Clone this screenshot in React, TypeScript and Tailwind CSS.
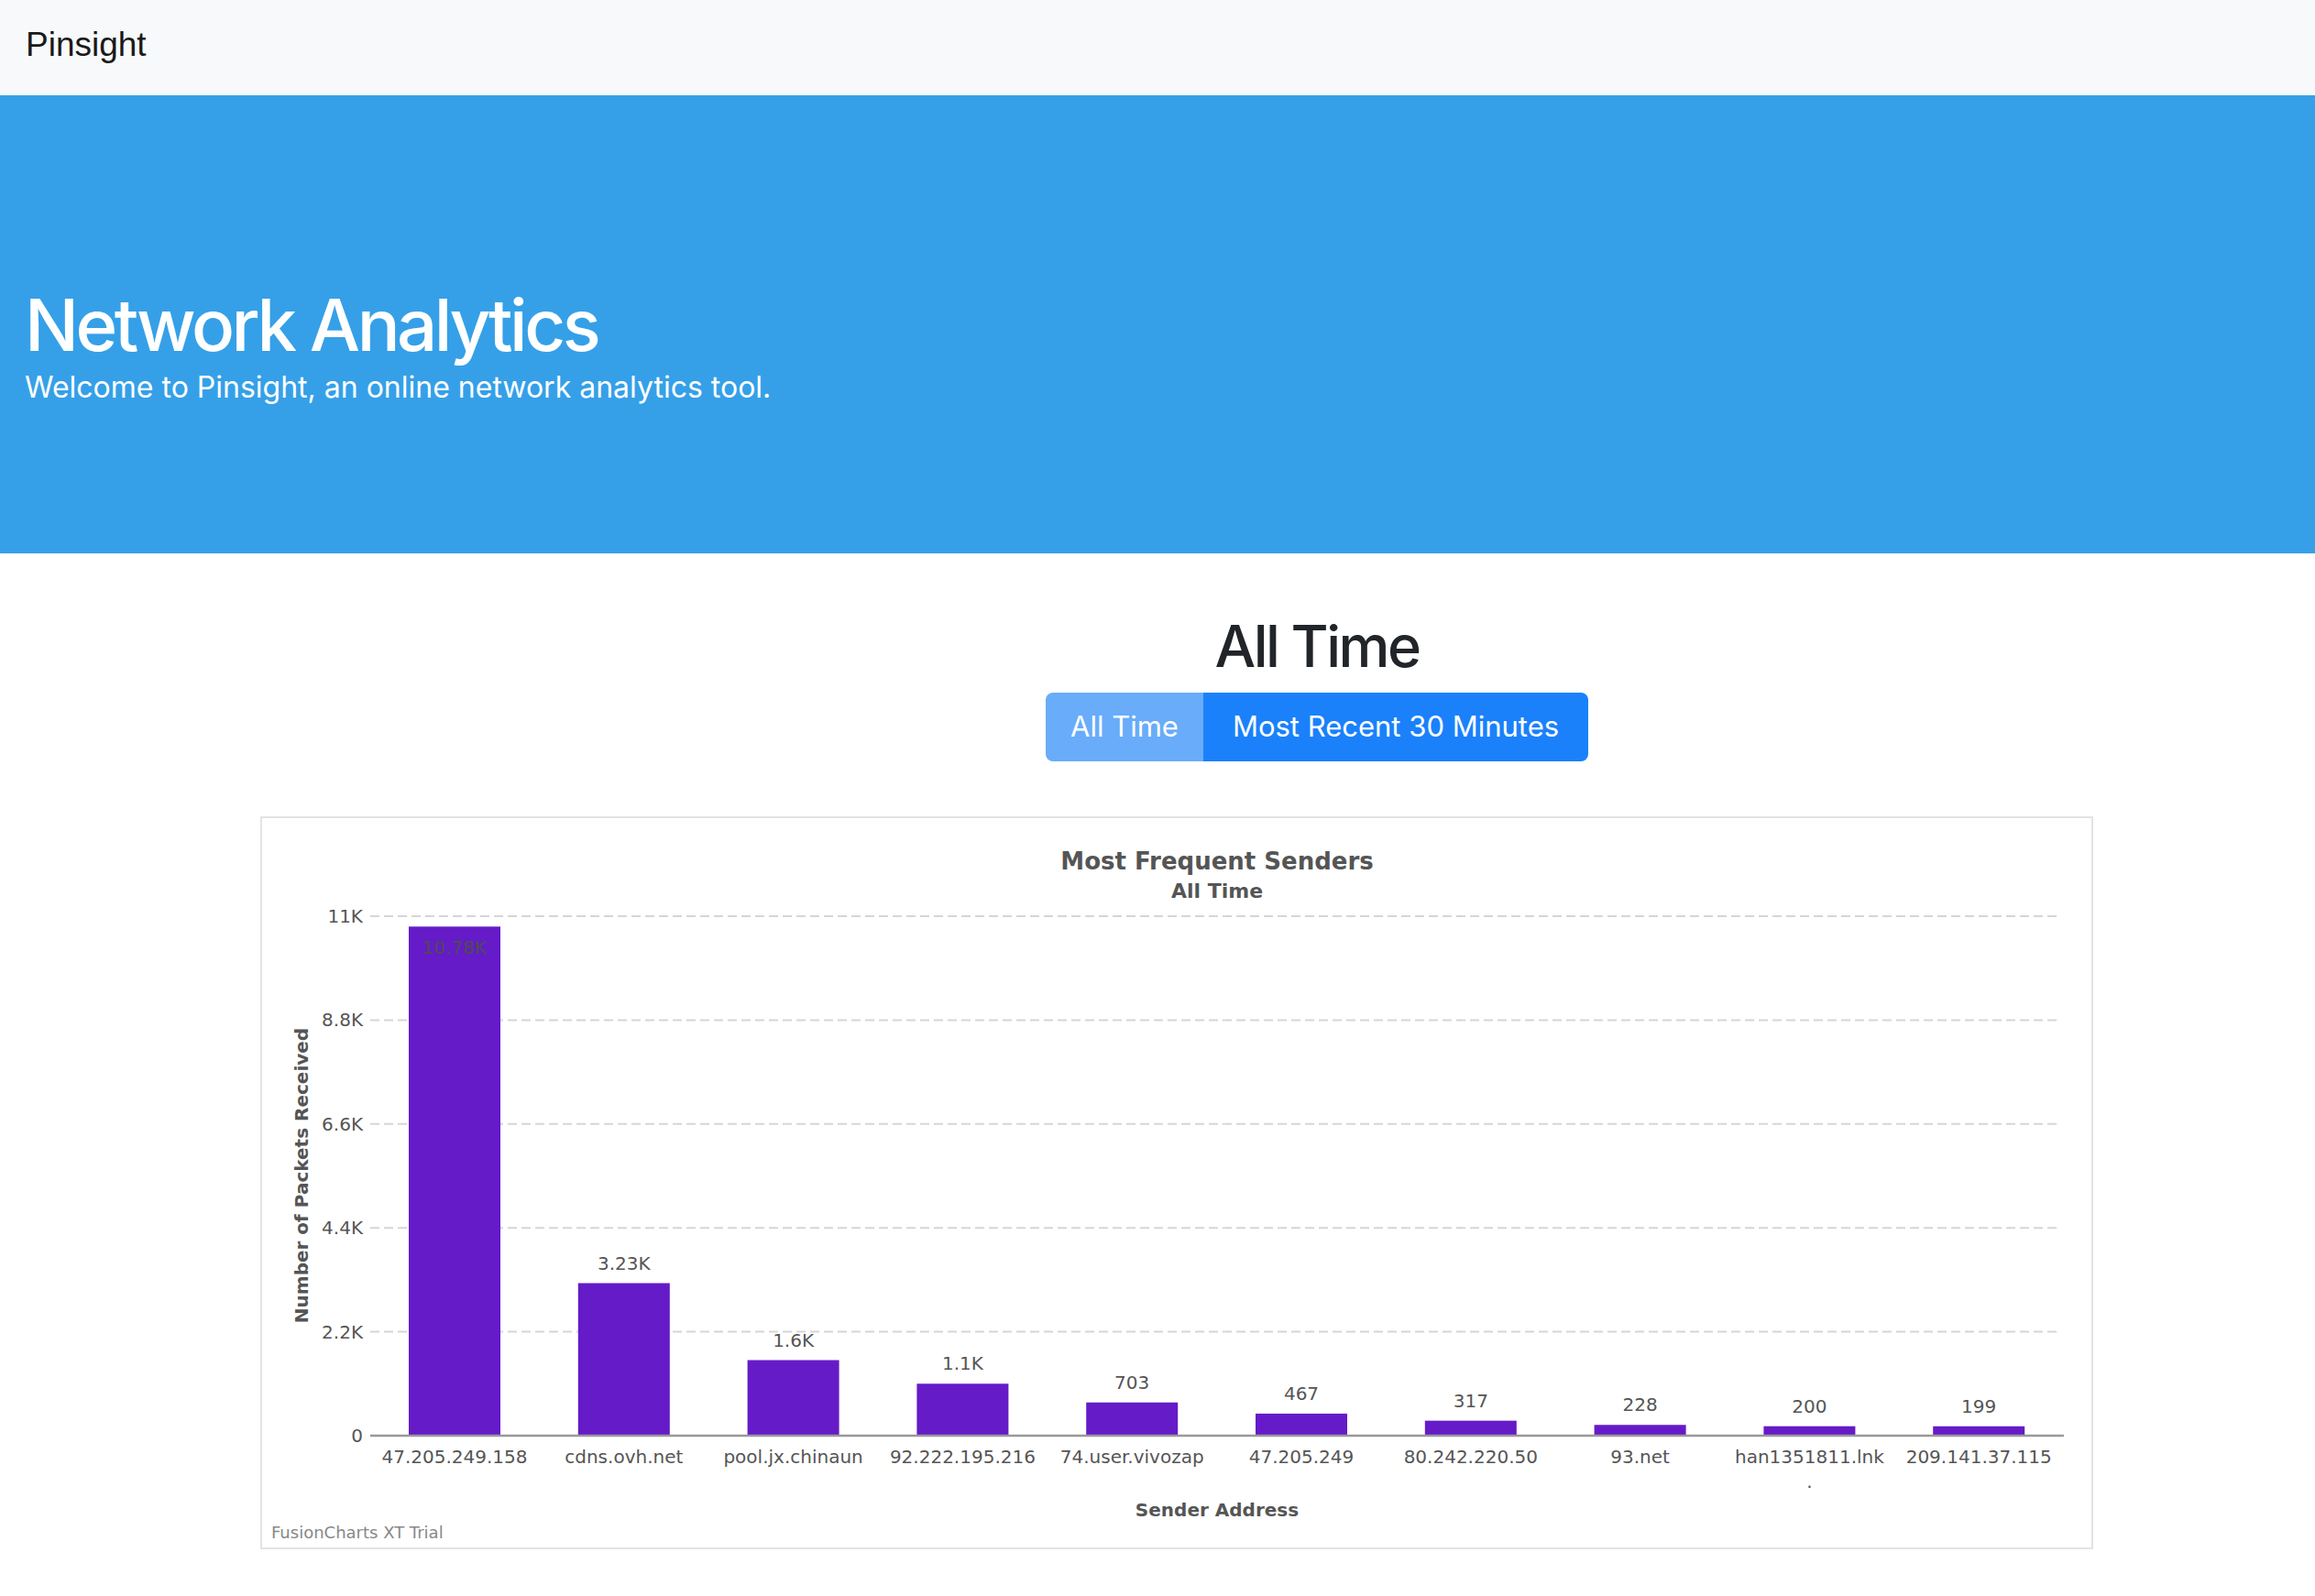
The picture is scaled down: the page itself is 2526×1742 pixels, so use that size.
import React from "react";

interface Sender {
  label: string;
  value: number;
  display: string;
}

const senders: Sender[] = [
  { label: "47.205.249.158", value: 10780, display: "10.78K" },
  { label: "cdns.ovh.net", value: 3230, display: "3.23K" },
  { label: "pool.jx.chinaun", value: 1600, display: "1.6K" },
  { label: "92.222.195.216", value: 1100, display: "1.1K" },
  { label: "74.user.vivozap", value: 703, display: "703" },
  { label: "47.205.249", value: 467, display: "467" },
  { label: "80.242.220.50", value: 317, display: "317" },
  { label: "93.net", value: 228, display: "228" },
  { label: "han1351811.lnk", value: 200, display: "200" },
  { label: "209.141.37.115", value: 199, display: "199" },
];

const ticks = ["0", "2.2K", "4.4K", "6.6K", "8.8K", "11K"];

// plot geometry, in px inside the chart card
const PLOT_LEFT = 118;
const PLOT_RIGHT = 1966;
const BASE_Y = 674;
const TOP_Y = 107;
const MAX = 11000;
const SLOT = 184.8;
const FIRST_CENTER = 210;
const BAR_W = 100;

const SendersChart = () => {
  const plotH = BASE_Y - TOP_Y;

  return (
    <svg
      width={1996}
      height={796}
      viewBox="0 0 1996 796"
      className="block font-['DejaVu_Sans',Verdana,sans-serif]"
    >
      <text x={1042} y={56} textAnchor="middle" fontSize={26} fontWeight="bold" fill="#555555">
        Most Frequent Senders
      </text>
      <text x={1042} y={87} textAnchor="middle" fontSize={22} fontWeight="bold" fill="#555555">
        All Time
      </text>

      {/* grid + y axis */}
      {ticks.map((t, i) => {
        const y = BASE_Y - (plotH / 5) * i;
        return (
          <g key={t}>
            {i > 0 && (
              <line
                x1={PLOT_LEFT}
                x2={PLOT_RIGHT - 5}
                y1={y}
                y2={y}
                stroke="#d6d6d6"
                strokeWidth={2}
                strokeDasharray="10 5"
              />
            )}
            <text x={110} y={y + 7} textAnchor="end" fontSize={20} fill="#555555">
              {t}
            </text>
          </g>
        );
      })}

      <text
        x={0}
        y={0}
        transform="translate(50 390) rotate(-90)"
        textAnchor="middle"
        fontSize={20}
        fontWeight="bold"
        fill="#555555"
      >
        Number of Packets Received
      </text>

      {/* bars */}
      {senders.map((s, i) => {
        const cx = FIRST_CENTER + SLOT * i;
        const h = (s.value / MAX) * plotH;
        const top = BASE_Y - h;
        const inside = i === 0;
        return (
          <g key={s.label}>
            <rect x={cx - BAR_W / 2} y={top} width={BAR_W} height={h} fill="#651bc8" />
            <text
              x={cx}
              y={inside ? top + 30 : top - 15}
              textAnchor="middle"
              fontSize={20}
              fill={inside ? "#4d4d4d" : "#555555"}
            >
              {s.display}
            </text>
            <text x={cx} y={704} textAnchor="middle" fontSize={20} fill="#555555">
              {s.label}
            </text>
            {s.label === "han1351811.lnk" && (
              <text x={cx} y={731} textAnchor="middle" fontSize={20} fill="#555555">
                .
              </text>
            )}
          </g>
        );
      })}

      <line x1={PLOT_LEFT} x2={PLOT_RIGHT} y1={BASE_Y} y2={BASE_Y} stroke="#999999" strokeWidth={2.5} />

      <text x={1042} y={762} textAnchor="middle" fontSize={20} fontWeight="bold" fill="#555555">
        Sender Address
      </text>
      <text x={10} y={786} fontSize={18} fill="#888888">
        FusionCharts XT Trial
      </text>
    </svg>
  );
};

const App = () => {
  return (
    <div className="min-h-[1742px] bg-white font-['Inter',sans-serif]">
      {/* Navbar */}
      <nav className="h-[104px] bg-[#f8f9fa] flex items-center pl-[28px] pb-[6px]">
        <span className="font-['Liberation_Sans',Arial,sans-serif] text-[37px] text-[#1a1a1a]">
          Pinsight
        </span>
      </nav>

      {/* Jumbotron */}
      <header className="h-[500px] bg-[#35a0e8] pl-[27px] pt-[207px] text-white">
        <h1 className="text-[78px] leading-[88px] font-medium tracking-[-0.045em]">Network Analytics</h1>
        <p className="text-[32px] leading-[48px]">
          Welcome to Pinsight, an online network analytics tool.
        </p>
      </header>

      {/* Time range */}
      <section className="pl-[348px] text-center">
        <h2 className="mt-[63px] text-[63px] leading-[76px] font-medium tracking-[-0.04em] text-[#212529]">
          All Time
        </h2>
        <div className="mt-[13px] inline-flex h-[75px] rounded-[8px] overflow-hidden text-white text-[31px]">
          <button className="w-[172px] bg-[#68acfa] flex items-center justify-center">All Time</button>
          <button className="w-[420px] bg-[#1a81fb] flex items-center justify-center">
            Most Recent 30 Minutes
          </button>
        </div>
      </section>

      {/* Chart */}
      <div className="mt-[60px] ml-[284px] w-[2000px] border-2 border-[#e3e3e3] bg-white">
        <SendersChart />
      </div>
    </div>
  );
};

export default App;
